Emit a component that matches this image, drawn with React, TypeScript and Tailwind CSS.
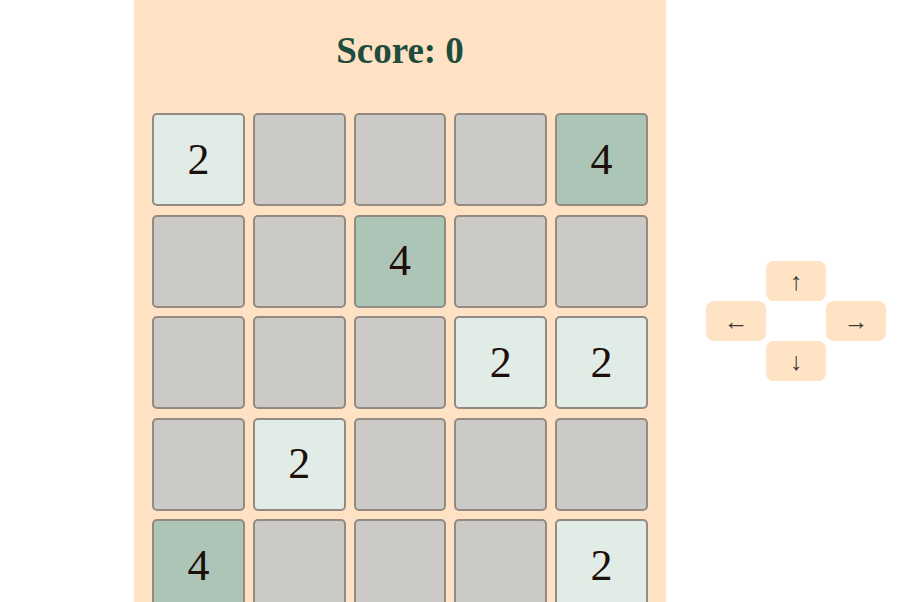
import React from "react";

const board: number[][] = [
  [2, 0, 0, 0, 4],
  [0, 0, 4, 0, 0],
  [0, 0, 0, 2, 2],
  [0, 2, 0, 0, 0],
  [4, 0, 0, 0, 2],
];

const tileColor = (v: number) => {
  if (v === 2) return "bg-[#e2ece7]";
  if (v === 4) return "bg-[#adc5b7]";
  return "bg-[#cbcac6]";
};

const Tile = ({ value }: { value: number }) => (
  <div
    className={`h-[93px] rounded-[5px] border-2 border-[#918b83] flex items-center justify-center text-[44px] text-[#1c0f0c] ${tileColor(value)}`}
  >
    {value > 0 ? value : ""}
  </div>
);

const ArrowButton = ({ label }: { label: string }) => (
  <button className="w-[60px] h-[40px] rounded-lg bg-[#ffe3c5] flex items-center justify-center text-[25px] leading-none text-[#3f3a35]">
    {label}
  </button>
);

export default function App() {
  return (
    <div className="flex bg-white font-['Liberation_Serif',serif] h-[602px] overflow-hidden">
      {/* panel */}
      <div className="ml-[134px] w-[532px] bg-[#ffe2c4] px-[18px] shrink-0">
        <h1 className="text-center font-bold text-[37px] text-[#1e4d3e] pt-[26px] pb-[38px] leading-[49px]">
          Score: 0
        </h1>
        <div className="grid grid-cols-5 gap-x-[8px] gap-y-[8.5px]">
          {board.flat().map((v, i) => (
            <Tile key={i} value={v} />
          ))}
        </div>
      </div>

      {/* controls */}
      <div className="ml-[40px] mt-[261px] grid grid-cols-[60px_60px_60px] grid-rows-[40px_40px_40px] self-start">
        <div />
        <ArrowButton label="↑" />
        <div />
        <ArrowButton label="←" />
        <div />
        <ArrowButton label="→" />
        <div />
        <ArrowButton label="↓" />
        <div />
      </div>
    </div>
  );
}
